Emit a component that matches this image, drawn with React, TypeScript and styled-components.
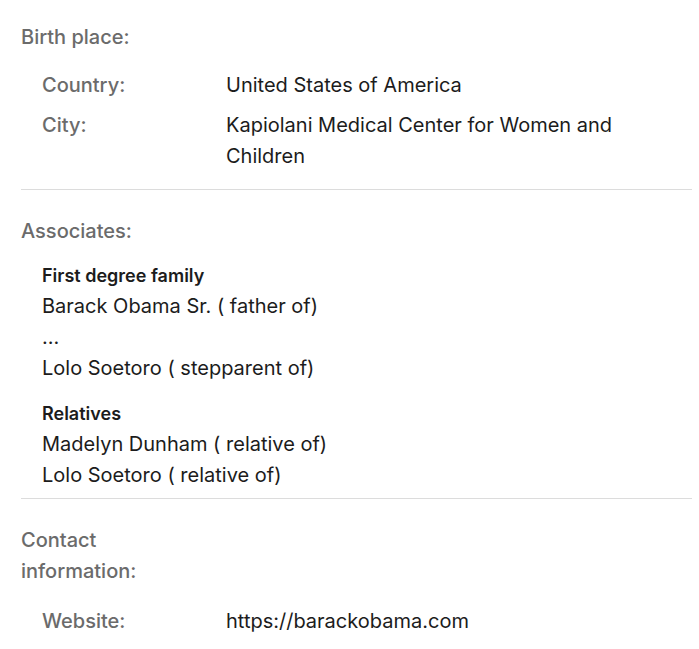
import React from "react";
import styled, { createGlobalStyle } from "styled-components";

const Global = createGlobalStyle`
  html, body { margin: 0; padding: 0; background: #ffffff; }
  body { font-family: Inter, "Noto Sans", sans-serif; -webkit-font-smoothing: antialiased; }
`;

const Page = styled.div`
  padding: 0 7px 0 21px;
`;

const Section = styled.section<{ $first?: boolean; $last?: boolean; $bottom: number }>`
  padding-top: ${(p) => (p.$first ? 22 : 26)}px;
  padding-bottom: ${(p) => p.$bottom}px;
  border-bottom: ${(p) => (p.$last ? "none" : "1px solid #dcdcdc")};
`;

const Heading = styled.h2`
  margin: 0;
  max-width: 150px;
  font-size: 20px;
  line-height: 31px;
  font-weight: 500;
  color: #6b6b6b;
`;

const FieldList = styled.div<{ $top: number }>`
  margin-top: ${(p) => p.$top}px;
  padding-left: 21px;
  display: grid;
  row-gap: 9px;
`;

const Field = styled.div`
  display: grid;
  grid-template-columns: 184px 1fr;
  font-size: 20px;
  line-height: 31px;
`;

const Label = styled.div`
  color: #6b6b6b;
  font-weight: 500;
`;

const Value = styled.div`
  color: #1c1c1c;
  padding-right: 20px;
`;

const Groups = styled.div`
  margin-top: 13px;
  padding-left: 21px;
  display: grid;
  row-gap: 14px;
`;

const Group = styled.div`
  display: flex;
  flex-direction: column;
`;

const GroupTitle = styled.div`
  font-size: 18px;
  line-height: 31px;
  font-weight: 600;
  color: #1c1c1c;
`;

const Item = styled.div`
  font-size: 20px;
  line-height: 31px;
  color: #1c1c1c;
`;

const groups = [
  {
    title: "First degree family",
    items: ["Barack Obama Sr. ( father of)", "...", "Lolo Soetoro ( stepparent of)"],
  },
  {
    title: "Relatives",
    items: ["Madelyn Dunham ( relative of)", "Lolo Soetoro ( relative of)"],
  },
];

export default function App() {
  return (
    <>
      <Global />
      <Page>
        <Section $first $bottom={17}>
          <Heading>Birth place:</Heading>
          <FieldList $top={17}>
            <Field>
              <Label>Country:</Label>
              <Value>United States of America</Value>
            </Field>
            <Field>
              <Label>City:</Label>
              <Value>Kapiolani Medical Center for Women and Children</Value>
            </Field>
          </FieldList>
        </Section>
        <Section $bottom={7}>
          <Heading>Associates:</Heading>
          <Groups>
            {groups.map((g) => (
              <Group key={g.title}>
                <GroupTitle>{g.title}</GroupTitle>
                {g.items.map((it, i) => (
                  <Item key={i}>{it}</Item>
                ))}
              </Group>
            ))}
          </Groups>
        </Section>
        <Section $last $bottom={20}>
          <Heading>Contact information:</Heading>
          <FieldList $top={19}>
            <Field>
              <Label>Website:</Label>
              <Value>https://barackobama.com</Value>
            </Field>
          </FieldList>
        </Section>
      </Page>
    </>
  );
}
